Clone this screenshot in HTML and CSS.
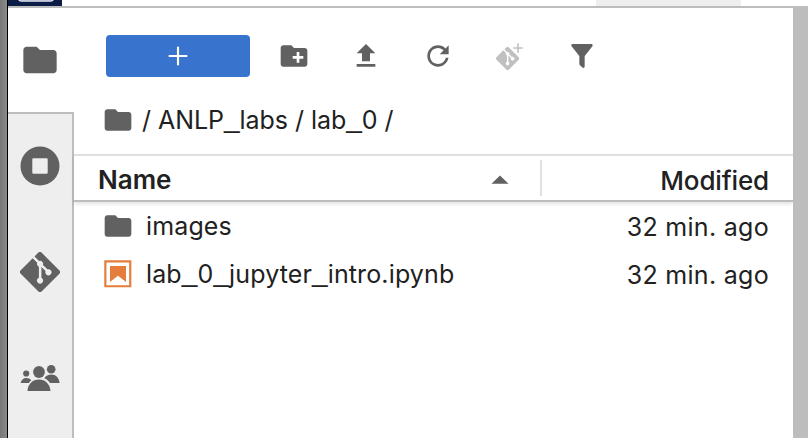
FILE: index.html
```html
<!DOCTYPE html>
<html lang="en">
<head>
<meta charset="utf-8">
<title>File Browser</title>
<link rel="stylesheet" href="styles.css">
</head>
<body>
<svg class="defs" width="0" height="0">
  <symbol id="folder" viewBox="0 0 24 24"><path d="M10 4H4c-1.1 0-1.99.9-1.99 2L2 18c0 1.1.9 2 2 2h16c1.1 0 2-.9 2-2V8c0-1.1-.9-2-2-2h-8l-2-2z"/></symbol>
  <symbol id="git" viewBox="0 0 92 92"><path d="M90.156 41.965L50.036 1.848a5.913 5.913 0 0 0-8.368 0l-8.332 8.332 10.566 10.566a7.03 7.03 0 0 1 7.23 1.684 7.043 7.043 0 0 1 1.673 7.277l10.183 10.184a7.026 7.026 0 0 1 7.278 1.672 7.04 7.04 0 0 1 0 9.957 7.045 7.045 0 0 1-9.961 0 7.038 7.038 0 0 1-1.532-7.66l-9.5-9.497V59.36a7.04 7.04 0 0 1 1.86 11.29 7.04 7.04 0 0 1-9.957 0 7.04 7.04 0 0 1 0-9.958 7.034 7.034 0 0 1 2.308-1.539V33.926a7.001 7.001 0 0 1-2.308-1.535 7.049 7.049 0 0 1-1.516-7.7L29.242 14.273 1.734 41.777a5.918 5.918 0 0 0 0 8.371L41.855 90.27a5.92 5.92 0 0 0 8.368 0l39.933-39.934a5.925 5.925 0 0 0 0-8.371"/></symbol>
</svg>
<div class="window">
  <header class="topbar">
    <div class="logo"><svg width="54" height="6" viewBox="0 0 54 6"><path d="M10.5-6V-2Q10.5 1 13.5 1H42.500Q45.500 1 45.500-2V-6Z" fill="#5b6a91" stroke="#e4e8f2" stroke-width="1.500"/></svg></div>
    <div class="menu-highlight"></div>
  </header>
  <div class="body">
    <nav class="sidebar">
      <div class="tab active"><svg width="40" height="40"><use href="#folder"/></svg></div>
      <div class="tab"><svg width="40" height="40" viewBox="0 0 40 40"><path fill-rule="evenodd" d="M20 .5a19.500 19.500 0 1 0 0 39a19.500 19.500 0 1 0 0-39zM13.500 12.300h13q1.200 0 1.200 1.200v13q0 1.200-1.200 1.200h-13q-1.200 0-1.200-1.200v-13q0-1.200 1.200-1.200z"/></svg></div>
      <div class="tab"><svg width="40" height="40"><use href="#git"/></svg></div>
      <div class="tab"><svg width="40" height="40" viewBox="0 0 40 40"><circle cx="6.200" cy="15.500" r="3.100"/><circle cx="19" cy="14" r="5.900"/><circle cx="31.200" cy="11.300" r="4.300"/><path d="M.6 25C1.200 22 3.300 20 6.200 20c2.200 0 4 .8 5.100 2.300-1 .8-1.800 1.600-2.400 2.700zM24.300 20.300c1.500-2.400 4-3.700 7-3.700 4.500 0 7.700 3.200 8.300 8.400H30c-1.400-2.100-3.200-3.700-5.700-4.700zM7.500 33c.4-6.600 5-11.400 11.500-11.400S30 26.400 30.500 33z"/></svg></div>
    </nav>
    <main class="browser">
      <div class="toolbar">
        <div class="new"><svg width="32" height="32" viewBox="0 0 24 24"><path d="M19 12.800h-6.200v6.200h-1.600v-6.200H5v-1.600h6.200V5h1.600v6.200H19z"/></svg></div>
        <svg width="32" height="32" viewBox="0 0 24 24"><path d="M20 6h-8l-2-2H4c-1.110 0-1.990.89-1.990 2L2 18c0 1.110.89 2 2 2h16c1.110 0 2-.89 2-2V8c0-1.110-.89-2-2-2zm-1 8h-3v3h-2v-3h-3v-2h3V9h2v3h3v2z"/></svg>
        <svg width="32" height="32" viewBox="0 0 24 24"><path d="M5 20h14v-2H5v2zm0-10h4v6h6v-6h4l-7-7-7 7z"/></svg>
        <svg width="32" height="32" viewBox="0 0 18 18"><path d="M9 13.500c-2.490 0-4.500-2.010-4.500-4.500S6.510 4.500 9 4.500c1.240 0 2.360.52 3.170 1.330L10 8h5V3l-1.760 1.760C12.150 3.680 10.660 3 9 3 5.690 3 3.010 5.690 3.010 9S5.690 15 9 15c2.970 0 5.430-2.160 5.900-5h-1.520c-.46 2-2.240 3.500-4.380 3.500z"/></svg>
        <svg class="disabled" width="32" height="32" viewBox="0 0 32 32"><use href="#git" x="1.800" y="6.700" width="23.600" height="23.600"/><path d="M19.300 7.200h3.900V3.300h1.600v3.900h3.900v1.600h-3.900v3.900h-1.600V8.800h-3.900z"/></svg>
        <svg width="32" height="32" viewBox="0 0 24 24"><path d="M14 12V19.880C14.040 20.180 13.940 20.500 13.710 20.710C13.320 21.100 12.690 21.100 12.300 20.710L10.290 18.700C10.060 18.470 9.960 18.160 10 17.870V12H9.970L4.210 4.620C3.870 4.190 3.950 3.560 4.380 3.220C4.570 3.080 4.780 3 5 3H19C19.220 3 19.430 3.080 19.620 3.220C20.050 3.560 20.130 4.190 19.790 4.620L14.030 12H14Z"/></svg>
      </div>
      <div class="crumbs"><svg width="32" height="32"><use href="#folder"/></svg><span class="path">/ ANLP<span class="us">_</span>labs / lab<span class="us">_</span>0 /</span></div>
      <div class="head">
        <div class="col-name"><span class="name-label">Name</span><svg width="18" height="9" viewBox="0 0 18 9"><path d="M.5 8.700L9 .5l8.500 8.200z"/></svg></div>
        <div class="col-modified"><span class="modified-label">Modified</span></div>
      </div>
      <div class="list">
        <div class="row"><svg width="32" height="32"><use href="#folder"/></svg><span class="file">images</span><span class="time">32 min. ago</span></div>
        <div class="row"><svg class="notebook" width="32" height="32" viewBox="0 0 32 32"><path d="M3.350 3.350h24.900v24.900H3.350z" fill="none" stroke="#e57d3c" stroke-width="2.200"/><path d="M8 8h16v16l-8-6.300L8 24z"/></svg><span class="file">lab<span class="us">_</span>0<span class="us">_</span>jupyter<span class="us">_</span>intro.ipynb</span><span class="time">32 min. ago</span></div>
      </div>
    </main>
    <div class="splitter"></div>
  </div>
</div>
</body>
</html>
```
FILE: styles.css
```css
* { box-sizing: border-box; }
body {
  margin: 0;
  height: 438px;
  overflow: hidden;
  background: linear-gradient(90deg, #777, #888 6px);
  font-family: Inter, "Liberation Sans", sans-serif;
  font-size: 25px;
  color: #212121;
}
svg { display: block; flex: none; fill: #616161; }
.defs { position: absolute; }
.window {
  height: 438px;
  margin-left: 7px;
  border-left: 1px solid #000;
  background: #fff;
  display: flex;
  flex-direction: column;
}
.topbar {
  height: 8px;
  flex: none;
  display: flex;
  border-bottom: 2px solid #bdbdbd;
}
.logo { width: 54px; background: #0b1d46; }
.menu-highlight { width: 145px; margin-left: 534px; background: #eee; }
.body { flex: 1; display: flex; min-height: 0; }
.sidebar {
  width: 66px;
  flex: none;
  background: #eee;
  border-right: 2px solid #bdbdbd;
}
.tab {
  height: 106px;
  padding-bottom: 2px;
  display: flex;
  align-items: center;
  justify-content: center;
}
.tab.active {
  width: 66px;
  background: #fff;
  border-bottom: 2px solid #bdbdbd;
  padding: 0 2px 0 0;
}
.browser { flex: 1; min-width: 0; }
.toolbar {
  height: 96px;
  padding: 27px 0 27px 32px;
  display: flex;
  align-items: center;
  gap: 40px;
}
.new {
  width: 144px;
  height: 42px;
  margin-right: -12px;
  border-radius: 4px;
  background: #3874cd;
  display: flex;
  align-items: center;
  justify-content: center;
}
.new svg { fill: #fff; }
.disabled { fill: #c0c0c0; }
.crumbs {
  height: 32px;
  padding-left: 28px;
  display: flex;
  align-items: center;
}
.path { margin-left: 8px; letter-spacing: -0.04px; }
.us {
  font-family: "Liberation Sans", sans-serif;
  font-size: 28px;
  line-height: 0;
  vertical-align: 2px;
}
.head {
  height: 48px;
  margin-top: 18px;
  border-top: 2px solid #e0e0e0;
  border-bottom: 2px solid #bdbdbd;
  box-shadow: 0 2px 4px rgba(0, 0, 0, .12);
  display: flex;
  align-items: center;
}
.col-name {
  width: 468px;
  height: 36px;
  padding: 3px 31px 0 24px;
  border-right: 2px solid #e0e0e0;
  display: flex;
  align-items: center;
  justify-content: space-between;
}
.name-label { font-size: 26px; font-weight: 600; }
.col-modified { flex: 1; padding: 5px 24px 0 0; text-align: right; }
.modified-label { font-size: 26px; font-weight: 500; letter-spacing: -0.15px; }
.row {
  height: 48px;
  padding: 0 24px 0 28px;
  display: flex;
  align-items: center;
}
.file { flex: 1; margin-left: 12px; letter-spacing: 0.13px; }
.time { padding-top: 2px; letter-spacing: 0.3px; }
.notebook { fill: #e57d3c; }
.splitter { width: 15px; flex: none; background: #bdbdbd; }
```
